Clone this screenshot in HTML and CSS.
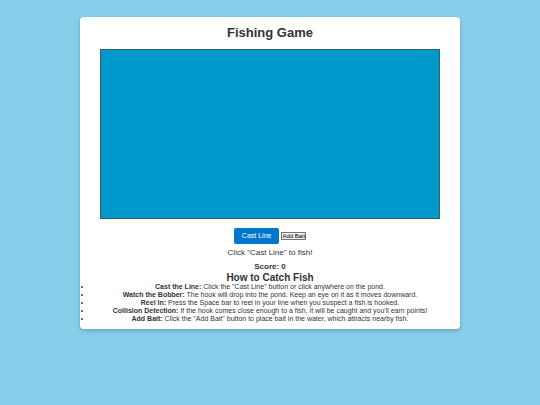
FILE: index.html
```html
<!DOCTYPE html>
<html lang="en">
<head>
<meta charset="utf-8">
<meta name="viewport" content="width=device-width, initial-scale=1">
<title>Fishing Game</title>
<link rel="stylesheet" href="styles.css">
</head>
<body>
<main class="game">
  <h1 class="title">Fishing Game</h1>
  <canvas class="pond" aria-label="Pond"></canvas>
  <div class="controls">
    <button class="cast" type="button">Cast Line</button>
    <button class="bait" type="button">Add Bait</button>
  </div>
  <p class="message">Click "Cast Line" to fish!</p>
  <p class="score">Score: 0</p>
  <h2 class="subtitle">How to Catch Fish</h2>
  <ul class="steps">
    <li><strong>Cast the Line:</strong> Click the "Cast Line" button or click anywhere on the pond.</li>
    <li><strong>Watch the Bobber:</strong> The hook will drop into the pond. Keep an eye on it as it moves downward.</li>
    <li><strong>Reel In:</strong> Press the Space bar to reel in your line when you suspect a fish is hooked.</li>
    <li><strong>Collision Detection:</strong> If the hook comes close enough to a fish, it will be caught and you'll earn points!</li>
    <li><strong>Add Bait:</strong> Click the "Add Bait" button to place bait in the water, which attracts nearby fish.</li>
  </ul>
</main>
</body>
</html>
```

FILE: styles.css
```css
* {
  box-sizing: border-box;
  margin: 0;
  padding: 0;
}

body {
  padding: 17px 8px;
  background: #87ceeb;
  color: #333;
  font-family: "Liberation Sans", Arial, sans-serif;
}

.game {
  max-width: 380px;
  margin: 0 auto;
  padding: 8px 8px 6px;
  border-radius: 4px;
  background: #fff;
  box-shadow: 0 2px 4px rgba(0, 0, 0, 0.2);
  text-align: center;
}

.title {
  margin-bottom: 8px;
  font-size: 13px;
  line-height: 16px;
}

.pond {
  display: block;
  width: calc(100% - 24px);
  aspect-ratio: 2 / 1;
  margin: 0 auto 9px;
  border: 1px solid #2f5f70;
  background: #0099cc;
}

.controls {
  display: flex;
  align-items: center;
  justify-content: center;
  gap: 2px;
  margin-bottom: 4px;
}

.cast {
  padding: 4px 8px;
  border: 0;
  border-radius: 2px;
  background: #0077cc;
  color: #fff;
  font: 7px/8px "Liberation Sans", Arial, sans-serif;
}

.bait {
  border: 1px solid #767676;
  background: #efefef;
  color: #000;
  font: 6px/6px "Liberation Sans", Arial, sans-serif;
}

.message {
  margin-bottom: 4px;
  font-size: 8px;
  line-height: 10px;
}

.score {
  font-size: 8px;
  font-weight: bold;
  line-height: 10px;
}

.subtitle {
  font-size: 10px;
  line-height: 11px;
}

.steps {
  padding: 0 4px;
  font-size: 7px;
  line-height: 8px;
}
```
